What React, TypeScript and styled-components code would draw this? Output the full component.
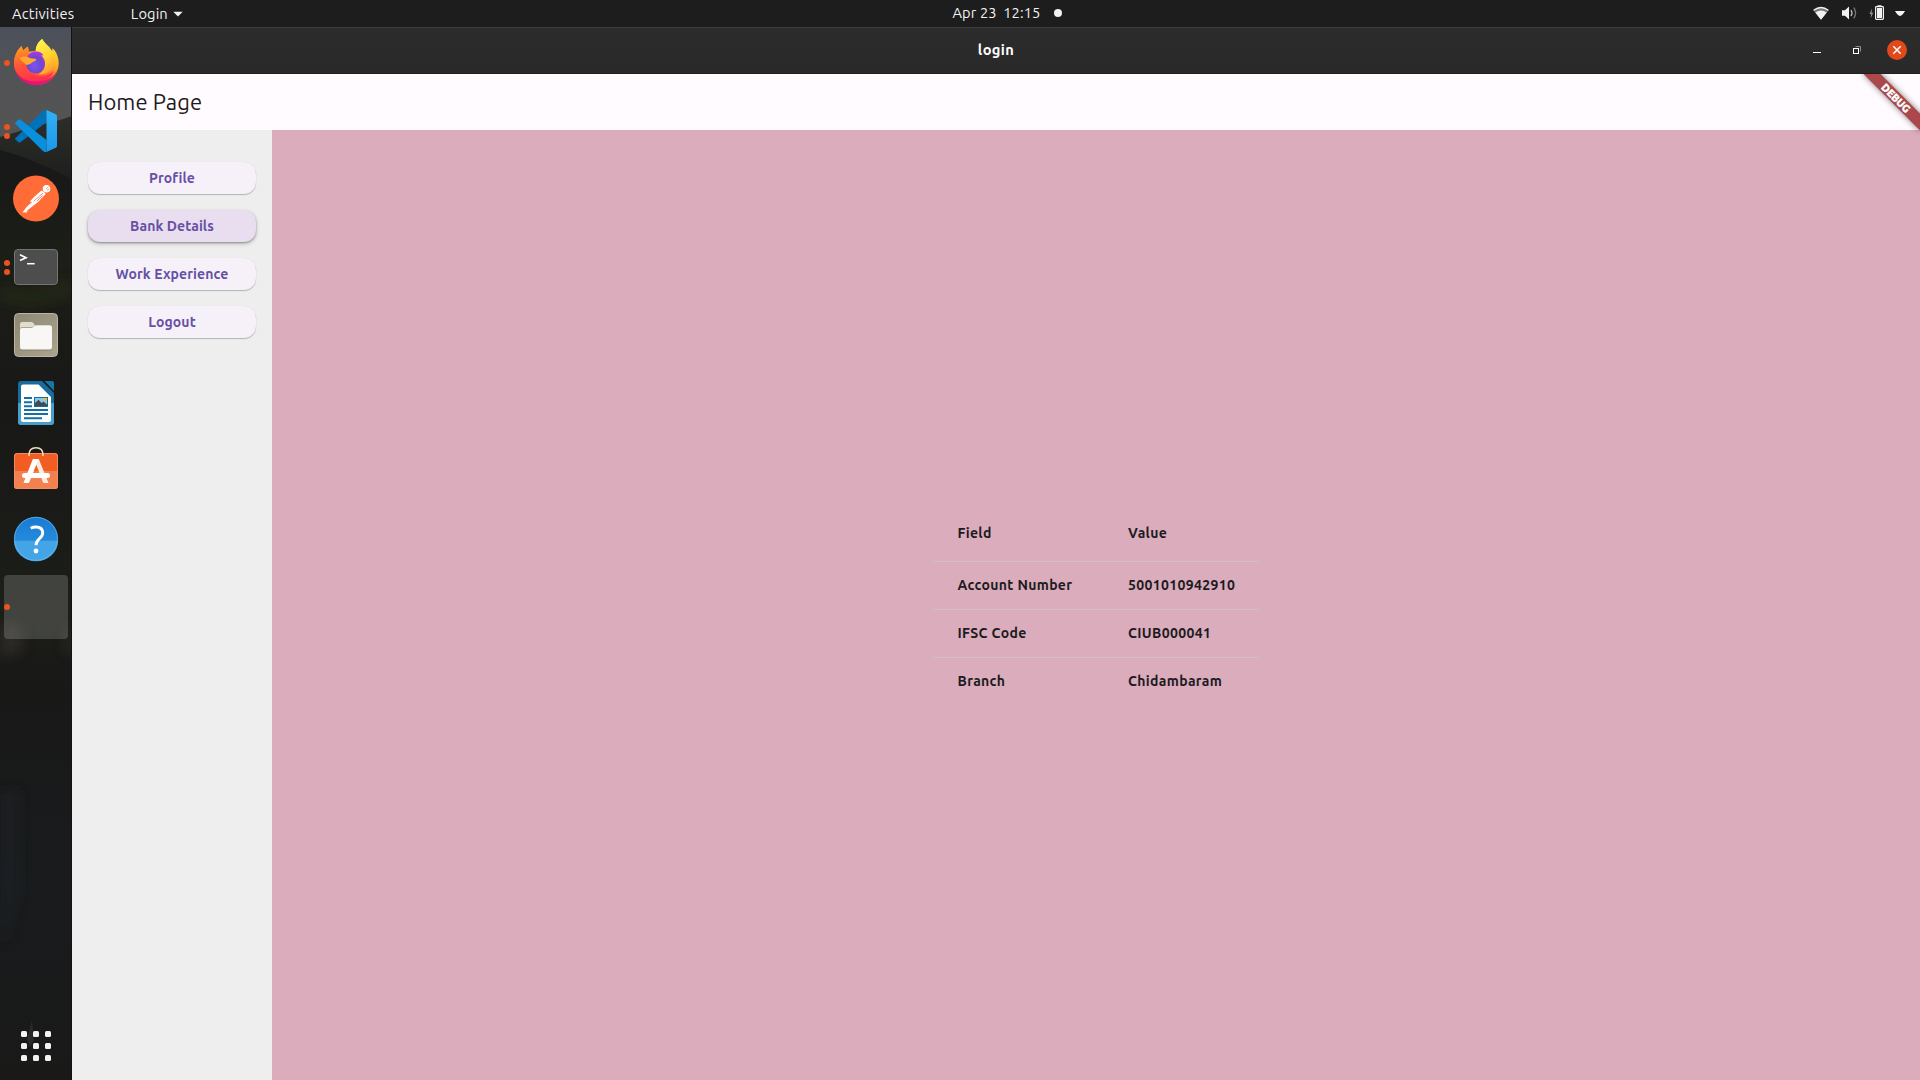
import React from "react";
import styled, { createGlobalStyle } from "styled-components";

const GlobalStyle = createGlobalStyle`
  * { box-sizing: border-box; }
  body {
    margin: 0;
    overflow: hidden;
    background: #1d1d1d;
    font-family: Ubuntu, "Noto Sans", "Open Sans", sans-serif;
  }
`;

/* ---------- Desktop shell ---------- */

const Desktop = styled.div`
  display: flex;
  flex-direction: column;
  width: 1920px;
  height: 1080px;
  overflow: hidden;
`;

const TopBar = styled.header`
  display: grid;
  grid-template-columns: 1fr auto 1fr;
  align-items: center;
  flex: none;
  height: 27px;
  background: #1d1d1d;
  color: #f2f2f2;
  font-size: 14.667px;
  line-height: 26px;
`;

const TopLeft = styled.div`
  display: flex;
  align-items: center;
  padding-left: 12px;
  gap: 56.5px;
`;

const MenuLabel = styled.span<{ $track: number }>`
  display: flex;
  align-items: center;
  gap: 5px;
  letter-spacing: ${(p) => p.$track}px;
`;

const Clock = styled.div`
  display: flex;
  align-items: center;
  gap: 6.5px;
  height: 27px;
  padding: 0 0 1px 94px;
  letter-spacing: 0.12px;
`;

const NoticeDot = styled.span`
  width: 8px;
  height: 8px;
  margin-left: 6.5px;
  border-radius: 50%;
  background: #f2f2f2;
`;

const StatusArea = styled.div`
  display: flex;
  justify-content: flex-end;
  align-items: center;
  height: 27px;
`;

const Body = styled.div`
  display: flex;
  flex: 1;
  min-height: 0;
`;

/* ---------- Dock ---------- */

const DockShell = styled.nav`
  position: relative;
  flex: none;
  width: 72px;
  overflow: hidden;
  background: #191918;
`;

const Wallpaper = styled.svg`
  position: absolute;
  inset: 0;
`;

const DockList = styled.div`
  position: relative;
  display: flex;
  flex-direction: column;
  height: 100%;
  padding: 2px 0 0;
`;

const DockItem = styled.div`
  display: grid;
  grid-template-columns: 12px 48px 12px;
  align-items: center;
  flex: none;
  height: 68px;
`;

const ActiveTile = styled(DockItem)`
  grid-template-columns: 8px;
  width: 64px;
  height: 64px;
  margin: 2px 4px;
  border-radius: 4px;
  background: rgba(255, 255, 255, 0.17);
`;

const Dots = styled.div<{ $flush?: boolean }>`
  display: flex;
  flex-direction: column;
  gap: 3px;
  padding-left: ${(p) => (p.$flush ? 0 : 4)}px;
`;

const Dot = styled.i`
  width: 6px;
  height: 6px;
  border-radius: 50%;
  background: #e95420;
`;

const AppsGrid = styled.div`
  display: grid;
  grid-template-columns: repeat(3, 6px);
  grid-auto-rows: 6px;
  gap: 6px;
  margin: auto auto 19px 21px;
`;

const AppsCell = styled.i`
  border-radius: 1.5px;
  background: #f2f2f0;
`;

/* ---------- Application window ---------- */

const Window = styled.main`
  display: flex;
  flex: 1;
  flex-direction: column;
  min-width: 0;
`;

const TitleBar = styled.div`
  display: grid;
  grid-template-columns: 1fr auto 1fr;
  align-items: center;
  flex: none;
  height: 47px;
  border-top: 1px solid #3b3b3b;
  border-bottom: 1px solid #202020;
  background: linear-gradient(#2c2c2c, #292929);
  color: #fff;
`;

const WindowTitle = styled.h1`
  grid-column: 2;
  margin: 0;
  padding-bottom: 2px;
  font-size: 14.667px;
  font-weight: 700;
  line-height: 20px;
  letter-spacing: 0.35px;
`;

const WindowControls = styled.div`
  display: flex;
  justify-content: flex-end;
`;

const AppArea = styled.section`
  position: relative;
  display: flex;
  flex: 1;
  flex-direction: column;
  min-height: 0;
  overflow: hidden;
`;

const AppBar = styled.div`
  display: flex;
  align-items: center;
  flex: none;
  height: 56px;
  padding: 0 0 2px 16px;
  background: #fffbfe;
  color: #1c1b1f;
  font-size: 22px;
  letter-spacing: 0.08px;
`;

const DebugBanner = styled.div`
  position: absolute;
  top: 18px;
  right: -16px;
  width: 80px;
  height: 12px;
  transform: rotate(45deg);
  background: #aa484b;
  box-shadow: 0 0 6px rgba(0, 0, 0, 0.5);
  color: #fff;
  font-size: 10.5px;
  font-weight: 900;
  line-height: 12px;
  text-align: center;
  -webkit-text-stroke: 0.4px #fff;
`;

const Columns = styled.div`
  display: flex;
  flex: 1;
  min-height: 0;
`;

const SideMenu = styled.aside`
  display: flex;
  flex: none;
  flex-direction: column;
  gap: 16px;
  width: 200px;
  padding: 32px 16px;
  background: #eeeeee;
`;

const MenuButton = styled.button<{ $hovered?: boolean }>`
  height: 32px;
  padding: 0;
  border: 0;
  border-radius: 12px;
  background: ${(p) => (p.$hovered ? "#e8def0" : "#f6f1f9")};
  box-shadow: ${(p) =>
    p.$hovered
      ? "0 1px 2px rgba(0,0,0,.3), 0 2px 4px rgba(0,0,0,.18)"
      : "0 1px 1px rgba(0,0,0,.24), 0 0 1px rgba(0,0,0,.1)"};
  color: #6750a4;
  font-family: inherit;
  font-size: 14px;
  font-weight: 700;
  letter-spacing: 0.1px;
`;

const Content = styled.div`
  display: flex;
  flex: 1;
  align-items: center;
  justify-content: center;
  background: #dbacbb;
`;

const Table = styled.div`
  width: 325px;
  color: #1c1b1f;
  font-size: 14px;
  font-weight: 700;
  letter-spacing: 0.35px;
`;

const TableRow = styled.div<{ $head?: boolean }>`
  display: grid;
  grid-template-columns: 170.5px 1fr;
  align-items: center;
  height: ${(p) => (p.$head ? 56 : 48)}px;
  padding: ${(p) => (p.$head ? "0 24px 1px" : "0 24px 2px")};
  border-top: ${(p) => (p.$head ? "0" : "1px solid #cfc0cf")};
`;

const Cell = styled.span`
  white-space: nowrap;
`;

/* ---------- Dock icons ---------- */

const icon = { width: 48, height: 48, viewBox: "0 0 48 48" };

const Firefox = () => (
  <svg {...icon}>
    <defs>
      <linearGradient id="ffBody" x1=".8" y1=".05" x2=".35" y2="1">
        <stop offset="0" stopColor="#ffe23a" />
        <stop offset=".4" stopColor="#ffae25" />
        <stop offset=".7" stopColor="#ff5a35" />
        <stop offset="1" stopColor="#f0157a" />
      </linearGradient>
      <linearGradient id="ffLeft" x1=".2" y1="0" x2=".5" y2="1">
        <stop offset="0" stopColor="#ff9a1f" />
        <stop offset=".5" stopColor="#ff5538" />
        <stop offset="1" stopColor="#fb2f50" />
      </linearGradient>
      <linearGradient id="ffFlame" x1=".3" y1="0" x2=".7" y2="1">
        <stop offset="0" stopColor="#fff44f" />
        <stop offset=".55" stopColor="#ffd22e" />
        <stop offset="1" stopColor="#ff9430" />
      </linearGradient>
      <radialGradient id="ffGlobe" cx=".45" cy=".65" r=".65">
        <stop offset="0" stopColor="#7d55f0" />
        <stop offset=".6" stopColor="#6a48cf" />
        <stop offset="1" stopColor="#b833e0" />
      </radialGradient>
    </defs>
    <path fill="url(#ffBody)" d="M30.300 0C26.500 2.500 23.800 7 23.700 12L16.300 12.700 16 7.700C14 8.600 12.300 10 11.300 11.500Q10 9.500 9.700 7C5.500 10.500 2 17 2 24.300a22.300 21.700 0 0 0 44.700 0C46.700 18.500 44.500 13 40.700 9.300L40.300 12.700C38 7.500 33 5.500 30.300 0Z" />
    <path fill="url(#ffLeft)" d="M9.700 7C5.500 10.500 2 17 2 24.300 2 36 12 43 24 43 33 43 39 39 42 32 36 38 26 39 19 35 13 31 13 22 18 16L16 7.700C14 8.600 12.300 10 11.300 11.500Q10 9.500 9.700 7Z" />
    <path fill="#e60f78" d="M3.200 31.500C7 38.500 14 42.500 24 42.500S41 39 45 31.500C42 40.500 34 46 24.300 46S6.200 40.500 3.200 31.500Z" opacity=".85" />
    <path fill="url(#ffFlame)" d="M30.300 0C26.500 2.500 23.800 7 23.700 12 29 13 33 18 33 24.500 33 29.500 30 33.500 26 35.500 34 36.500 42 31 43 22 43.300 18.500 42.500 15 40.700 9.300L40.300 12.700C38 7.500 33 5.500 30.300 0Z" />
    <path fill="url(#ffGlobe)" d="M15 19C16.500 14.500 20 12.500 24 12.500 28 12.500 30.300 14 31.500 16.500L29 16.200C32 19 33.500 22 33 26 32.500 31 28.800 34.300 23.800 34.300 18.500 34.300 14.300 30.300 14.200 25Z" />
    <path fill="#ffa82a" d="M7.500 19C11 16.800 15 17 18 19 20 19.800 22.500 19.200 24.300 20.300 24.300 22.300 20.500 22.800 19.500 24 17.800 25.600 15.500 25.600 14.500 26 12.500 24 9.500 22.500 7.500 19Z" />
  </svg>
);

const VSCode = () => (
  <svg {...icon}>
    <defs>
      <linearGradient id="vsFold" x1="0" y1="0" x2="0" y2="1">
        <stop offset="0" stopColor="#2fb3f6" />
        <stop offset="1" stopColor="#1d96ea" />
      </linearGradient>
    </defs>
    <path fill="#0072ba" d="M3.300 31.200 31 4q1.500-1.500 3.500-1v12L8.500 35.300q-1 .8-2 0L3.300 32.500q-.6-.6 0-1.300Z" />
    <path fill="#0a8fdc" d="M3.300 15.500 6.500 12.700q1-.8 2 0L34.500 33V45q-2 .5-3.500-1L3.300 16.800q-.6-.7 0-1.300Z" />
    <path fill="url(#vsFold)" d="M34.500 3 43.700 7.200q1.300.7 1.300 2v29.600q0 1.300-1.300 2L34.500 45Z" />
  </svg>
);

const Postman = () => (
  <svg {...icon}>
    <circle cx="24" cy="23.500" r="23" fill="#ff6c37" />
    <circle cx="34.500" cy="13.800" r="3.800" fill="#fff" />
    <path d="m34 14 2.300-2M35 15.500l2-1.500" stroke="#ff6c37" strokeWidth=".7" />
    <path fill="#fff" d="M29.500 15.500 22 22 17.700 26.800 20.200 27 15 31.500 11.500 36 10.500 37.300 15 37.500 15.300 35.500 21.500 30.500 26.500 26.800 29 23.800 33 19.700 33.500 18.200Z" />
    <path d="M31 18 21.500 26.500m9-6-5.500 5.500" stroke="#ff6c37" strokeWidth=".8" fill="none" />
  </svg>
);

const Terminal = () => (
  <svg {...icon}>
    <rect x="2.500" y="6.500" width="43" height="35" rx="3.500" fill="#4d4d4d" stroke="#747474" />
    <path d="m8 11.800 6 2.900-6 2.900" fill="none" stroke="#fff" strokeWidth="1.700" />
    <path d="M15 20.700h7.700" stroke="#fff" strokeWidth="1.500" />
  </svg>
);

const Files = () => (
  <svg {...icon}>
    <defs>
      <linearGradient id="filesBg" x1="0" y1="0" x2="1" y2="1">
        <stop offset="0" stopColor="#8e8872" />
        <stop offset="1" stopColor="#aaa38d" />
      </linearGradient>
    </defs>
    <rect x="2.500" y="2.500" width="43" height="43" rx="4" fill="url(#filesBg)" stroke="#bbb6a4" />
    <path d="M8 36v-23q0-2 2-2h9q1.500 0 2.500 1.200L23.500 15H38v8Z" fill="#e0dccf" />
    <path d="M8 37.500V18q0-2 2-2h9.500q1.500 0 2.500-1l.8-.5q.5-.5 1.500-.5H38q2 0 2 2v21.500q0 2-2 2H10q-2 0-2-2Z" fill="#716b59" opacity=".5" />
    <path d="M8 36.500V19q0-2 2-2h9q1.500 0 2.500-1.200l1-.8q.6-.7 2-.7H38q2 0 2 2v20.200q0 2-2 2H10q-2 0-2-2Z" fill="#f8f7f5" />
  </svg>
);

const Writer = () => (
  <svg {...icon}>
    <path d="M9 2h21l12 12v29q0 3-3 3H9q-3 0-3-3V5q0-3 3-3Z" fill="#176b9e" />
    <path d="M6 24h36v19q0 3-3 3H9q-3 0-3-3Z" fill="#489fca" />
    <path d="M11 5.500h15.500L39 18v23q0 2-2 2H11q-2 0-2-2V7.500q0-2 2-2Z" fill="#fff" />
    <path d="M32.500 2H40q2 0 2 2v8Z" fill="#1875a8" />
    <path d="M12 19h8M12 23.200h8M12 27.300h8M12 31h24M12 35h24M12 39.200h18" stroke="#1270a5" strokeWidth="2" />
    <rect x="22" y="18" width="14" height="10" fill="#126c9d" />
    <rect x="23" y="19" width="12" height="8" fill="#88c9e8" />
    <path d="m23 27 0-3 3.500-3.300 3.200 3.200 1.800-1.500 3.500 3V27Z" fill="#454b4d" />
    <path d="M32 19h3v3q-3 0-3-3Z" fill="#f5bd27" />
  </svg>
);

const Software = () => (
  <svg {...icon}>
    <rect x="2" y="6" width="44" height="36" rx="3" fill="#f15d22" />
    <path d="M2 24h44v15q0 3-3 3H5q-3 0-3-3Z" fill="#f3814f" />
    <rect x="2.500" y="6.500" width="43" height="35" rx="3" fill="none" stroke="#f58b60" />
    <path d="M17 9V7.800q0-7 7-7t7 7V9" fill="none" stroke="#f2dfb5" strokeWidth="1.600" />
    <path d="M21 12h5.800L36.500 36h-5.200L24.300 17.700 16.800 36h-5.200Z" fill="#fdebe2" />
    <path d="M21 12h5.200L16.800 36h-5.200Z" fill="#fff" />
    <rect x="10" y="26" width="28" height="5" rx="2.500" fill="#fff" />
  </svg>
);

const Help = () => (
  <svg {...icon}>
    <defs>
      <linearGradient id="helpTop" x1="0" y1="0" x2="0" y2="1">
        <stop offset="0" stopColor="#187bd3" />
        <stop offset="1" stopColor="#3297e2" />
      </linearGradient>
    </defs>
    <circle cx="24" cy="23.800" r="22" fill="url(#helpTop)" />
    <path d="M2 25.800a22 20.500 0 0 0 44 0Z" fill="#43a5e6" />
    <circle cx="24" cy="23.800" r="21.500" fill="none" stroke="#69b9ed" strokeWidth=".7" />
    <path d="M18.700 13.200q2.500-1.200 5-1.200 7 0 7 6 0 3-3.500 5.800-3.200 2.700-3.200 6.500" fill="none" stroke="#fff" strokeWidth="2.900" />
    <circle cx="24" cy="36" r="2.400" fill="#fff" />
  </svg>
);

const dockApps = [
  { name: "Firefox", Icon: Firefox, windows: 1 },
  { name: "Code", Icon: VSCode, windows: 2 },
  { name: "Postman", Icon: Postman, windows: 0 },
  { name: "Terminal", Icon: Terminal, windows: 2 },
  { name: "Files", Icon: Files, windows: 0 },
  { name: "Writer", Icon: Writer, windows: 0 },
  { name: "Software", Icon: Software, windows: 0 },
  { name: "Help", Icon: Help, windows: 0 },
];

const Backdrop = () => (
  <Wallpaper width="72" height="1053" viewBox="0 27 72 1053">
    <defs>
      <linearGradient id="sky" x1="0" y1="0" x2="0" y2="1">
        <stop offset="0" stopColor="#4b505a" />
        <stop offset=".3" stopColor="#525357" />
        <stop offset="1" stopColor="#555453" />
      </linearGradient>
      <linearGradient id="hill" x1="0" y1="0" x2="0" y2="1">
        <stop offset="0" stopColor="#2c2e29" />
        <stop offset="1" stopColor="#1d1e1c" />
      </linearGradient>
      <linearGradient id="woods" x1="0" y1="0" x2="0" y2="1">
        <stop offset="0" stopColor="#171818" />
        <stop offset=".12" stopColor="#1c1e17" />
        <stop offset=".28" stopColor="#181817" />
        <stop offset=".5" stopColor="#1c1e18" />
        <stop offset=".58" stopColor="#181817" />
        <stop offset=".78" stopColor="#191b1d" />
        <stop offset="1" stopColor="#191918" />
      </linearGradient>
      <filter id="soft" x="-50%" y="-50%" width="200%" height="200%">
        <feGaussianBlur stdDeviation="6" />
      </filter>
    </defs>
    <path fill="url(#sky)" d="M0 27h72v120H0Z" />
    <path fill="url(#hill)" d="M0 137 20 131 40 125 60 120 72 116V185H0Z" />
    <path fill="url(#woods)" d="M0 150 20 156 45 166 72 179V1080H0Z" />
    <path fill="#242718" filter="url(#soft)" d="M0 287 25 291 45 286 72 277V297L30 306 0 300Z" />
    <path fill="#383331" filter="url(#soft)" opacity=".6" d="M0 622 22 626 22 652 0 658ZM66 624 72 630V655H66Z" />
    <path fill="#1b2226" filter="url(#soft)" opacity=".6" d="M0 790H20V890L6 940H0Z" />
    <path fill="#3b3a3b" opacity=".5" d="m27 1040 5-20 2 20-4 7Z" />
    <path stroke="#121212" d="M71.500 27V1080" />
  </Wallpaper>
);

const RunningDots = ({ count, flush }: { count: number; flush?: boolean }) => (
  <Dots $flush={flush}>
    {Array.from({ length: count }, (_, i) => (
      <Dot key={i} />
    ))}
  </Dots>
);

const Dock = () => (
  <DockShell>
    <Backdrop />
    <DockList>
      {dockApps.map(({ name, Icon, windows }) => (
        <DockItem key={name}>
          <RunningDots count={windows} />
          <Icon />
        </DockItem>
      ))}
      <ActiveTile>
        <RunningDots count={1} flush />
      </ActiveTile>
      <AppsGrid>
        {Array.from({ length: 9 }, (_, i) => (
          <AppsCell key={i} />
        ))}
      </AppsGrid>
    </DockList>
  </DockShell>
);

const StatusIcons = () => (
  <svg width="120" height="27" viewBox="1800 0 120 27">
    <path d="M1813.300 10.300q7.700-6.200 15.400 0L1821 19.700Z" fill="#777" />
    <path d="M1813.600 10.300q7.400-5.600 14.800 0" fill="none" stroke="#f2f2f2" strokeWidth="1.300" />
    <path d="M1815.300 12.500q5.700-3.800 11.400 0L1821 19.700Z" fill="#f2f2f2" />
    <path d="M1842 10.300h3l4-3.800v13l-4-3.800h-3Z" fill="#f2f2f2" />
    <path d="M1851 10q2 3 0 6" fill="none" stroke="#bbb" strokeWidth="1.300" />
    <path d="M1853.800 7.700q3.600 5.300 0 10.600" fill="none" stroke="#777" strokeWidth="1.300" />
    <path d="m1872 8.500-2.500 5.500h1.700l-.7 4.500 2.700-5.700h-1.700Z" fill="#999" />
    <path d="M1877.500 5.200h4v1.500h-4Z" fill="#f2f2f2" />
    <rect x="1875.600" y="6.600" width="7.800" height="12.700" rx=".8" fill="none" stroke="#f2f2f2" strokeWidth="1.200" />
    <path d="M1877 8h5v10h-5Z" fill="#f2f2f2" />
    <path d="M1895 11h10q-2.500 4.500-5 5-2.500-.5-5-5Z" fill="#f2f2f2" />
  </svg>
);

const WindowIcons = () => (
  <svg width="120" height="45" viewBox="1800 28 120 45">
    <path d="M1813 52.500h8" stroke="#fff" />
    <path d="M1855.500 46.500h5v5" fill="none" stroke="#8c8c8c" />
    <rect x="1853.500" y="48.500" width="5" height="5" fill="none" stroke="#fff" />
    <circle cx="1897" cy="50" r="10" fill="#e2491a" />
    <path d="m1893.300 46.300 7.400 7.400m0-7.400-7.400 7.400" stroke="#fff" strokeWidth="1.500" />
  </svg>
);

const menu = [
  { label: "Profile" },
  { label: "Bank Details", hovered: true },
  { label: "Work Experience" },
  { label: "Logout" },
];

const rows = [
  { field: "Field", value: "Value" },
  { field: "Account Number", value: "5001010942910" },
  { field: "IFSC Code", value: "CIUB000041" },
  { field: "Branch", value: "Chidambaram" },
];

export default function App() {
  return (
    <Desktop>
      <GlobalStyle />
      <TopBar>
        <TopLeft>
          <MenuLabel $track={0.22}>Activities</MenuLabel>
          <MenuLabel $track={0.12}>
            Login
            <svg width="10" height="6" viewBox="0 0 10 6">
              <path d="M.3.700h9.400L5 5.500Z" fill="#f2f2f2" />
            </svg>
          </MenuLabel>
        </TopLeft>
        <Clock>
          <span>Apr 23</span>
          <span>12:15</span>
          <NoticeDot />
        </Clock>
        <StatusArea>
          <StatusIcons />
        </StatusArea>
      </TopBar>
      <Body>
        <Dock />
        <Window>
          <TitleBar>
            <WindowTitle>login</WindowTitle>
            <WindowControls>
              <WindowIcons />
            </WindowControls>
          </TitleBar>
          <AppArea>
            <AppBar>Home Page</AppBar>
            <Columns>
              <SideMenu>
                {menu.map((m) => (
                  <MenuButton key={m.label} $hovered={m.hovered}>
                    {m.label}
                  </MenuButton>
                ))}
              </SideMenu>
              <Content>
                <Table>
                  {rows.map((r, i) => (
                    <TableRow key={r.field} $head={i === 0}>
                      <Cell>{r.field}</Cell>
                      <Cell>{r.value}</Cell>
                    </TableRow>
                  ))}
                </Table>
              </Content>
            </Columns>
            <DebugBanner>DEBUG</DebugBanner>
          </AppArea>
        </Window>
      </Body>
    </Desktop>
  );
}
